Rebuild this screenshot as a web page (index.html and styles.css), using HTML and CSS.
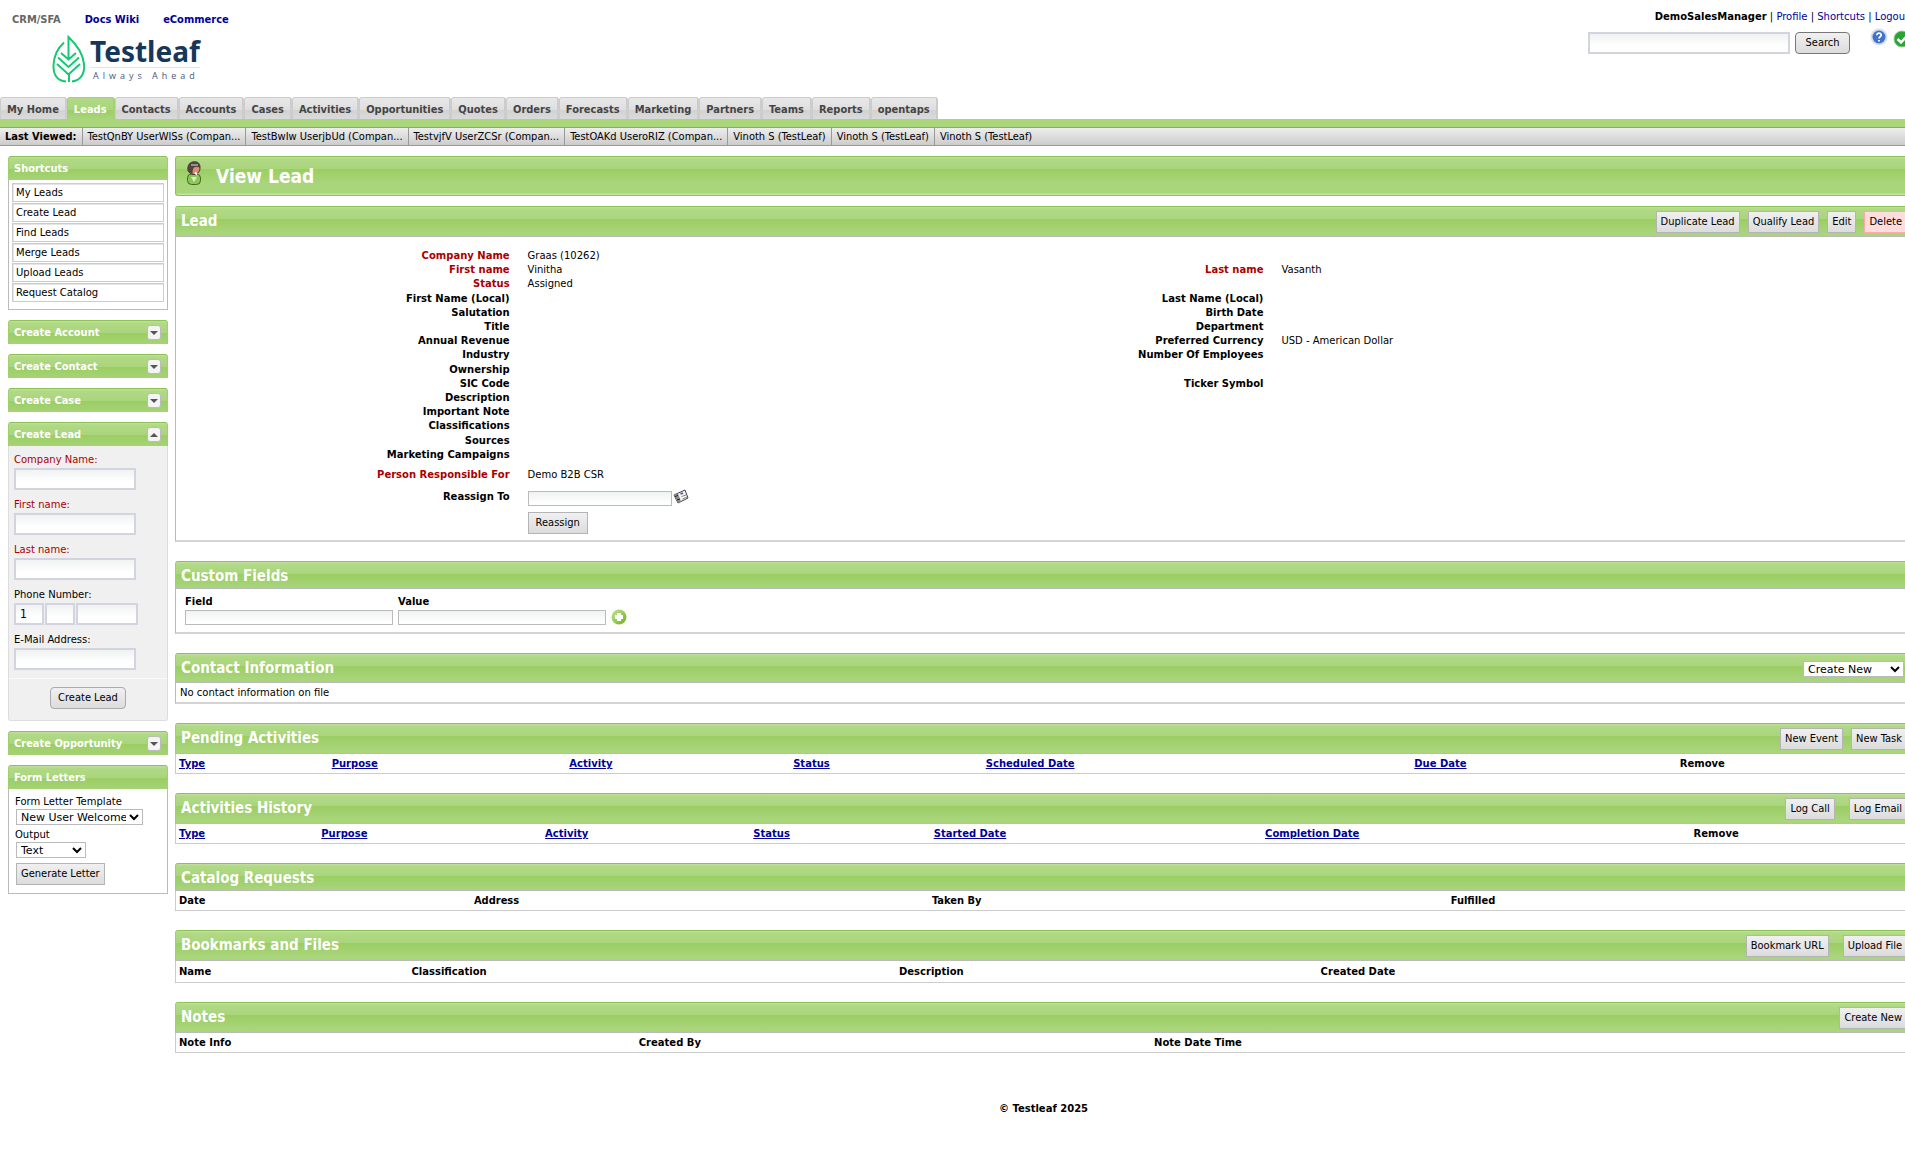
FILE: index.html
```html
<!DOCTYPE html>
<html lang="en">
<head>
<meta charset="utf-8">
<title>View Lead | opentaps CRM</title>
<link rel="stylesheet" href="styles.css">
</head>
<body>
<div class="page">
  <header class="top">
    <div class="brand">
      <nav class="apps"><span class="app-current">CRM/SFA</span><a href="#wiki">Docs Wiki</a><a href="#shop">eCommerce</a></nav>
      <div class="logo">
        <svg class="leaf" viewBox="0 0 34 48" width="34" height="48" fill="none" stroke="#14c972" stroke-width="2" aria-hidden="true">
          <path d="M14 46.500C4 46 1 38 1.500 30C2 20 7 12 12 7.500M20 46.500C30 45 33 37 32 29C31 18 24 9 16.500 2V23M17 47V39M5 29L16.500 39.500L28 29M6 22.500L16.500 32L27 22.500M9 18L16.500 24.500L24 18"/>
        </svg>
        <div class="wordmark"><span class="logo-name">Testleaf</span><span class="logo-tag">Always Ahead</span></div>
      </div>
    </div>
    <div class="account">
      <div class="user-links"><b>DemoSalesManager</b> | <a href="#profile">Profile</a> | <a href="#shortcuts">Shortcuts</a> | <a href="#logout">Logout</a></div>
      <div class="search-row">
        <input class="field search-box" type="text" aria-label="Search">
        <button class="btn btn-round btn-search">Search</button>
        <svg class="help" width="18" height="18" viewBox="0 0 18 18" aria-hidden="true"><circle cx="9" cy="9" r="8.500" fill="#d5dff2"/><circle cx="9" cy="9" r="6.500" fill="#4272cc"/><path d="M6.800 7.200C6.800 4.300 11.400 4.500 11.200 7.200C11 8.800 9 8.700 9 10.500M9 12V13.500" stroke="#fff" stroke-width="1.800" fill="none"/></svg>
        <svg class="ok" width="18" height="18" viewBox="0 0 18 18" aria-hidden="true"><circle cx="9" cy="9" r="8" fill="#2aa535" stroke="#8bc98e"/><path d="M4.500 9L8 12.500L14 6" stroke="#fff" stroke-width="2.500" fill="none"/></svg>
      </div>
    </div>
  </header>

  <nav class="tabs">
    <a href="#home">My Home</a><a href="#leads" class="active">Leads</a><a href="#contacts">Contacts</a><a href="#accounts">Accounts</a><a href="#cases">Cases</a><a href="#activities">Activities</a><a href="#opportunities">Opportunities</a><a href="#quotes">Quotes</a><a href="#orders">Orders</a><a href="#forecasts">Forecasts</a><a href="#marketing">Marketing</a><a href="#partners">Partners</a><a href="#teams">Teams</a><a href="#reports">Reports</a><a href="#opentaps">opentaps</a>
  </nav>
  <div class="tab-rule"></div>
  <div class="viewed">
    <b>Last Viewed:</b><a href="#v1">TestQnBY UserWlSs (Compan...</a><a href="#v2">TestBwIw UserjbUd (Compan...</a><a href="#v3">TestvjfV UserZCSr (Compan...</a><a href="#v4">TestOAKd UseroRIZ (Compan...</a><a href="#v5">Vinoth S (TestLeaf)</a><a href="#v6">Vinoth S (TestLeaf)</a><a href="#v7">Vinoth S (TestLeaf)</a>
  </div>

  <div class="columns">
    <aside class="side">
      <section>
        <h2 class="side-head">Shortcuts</h2>
        <ul class="shortcuts">
          <li><a href="#my">My Leads</a></li><li><a href="#create">Create Lead</a></li><li><a href="#find">Find Leads</a></li><li><a href="#merge">Merge Leads</a></li><li><a href="#upload">Upload Leads</a></li><li><a href="#catalog">Request Catalog</a></li>
        </ul>
      </section>
      <h2 class="side-head tall">Create Account<button class="toggle" aria-label="Expand Create Account"></button></h2>
      <h2 class="side-head tall">Create Contact<button class="toggle" aria-label="Expand Create Contact"></button></h2>
      <h2 class="side-head tall">Create Case<button class="toggle" aria-label="Expand Create Case"></button></h2>
      <section>
        <h2 class="side-head tall">Create Lead<button class="toggle open" aria-label="Collapse Create Lead"></button></h2>
        <form class="quick">
          <div class="quick-fields">
            <label class="required" for="company">Company Name:</label><input class="field" id="company" type="text">
            <label class="required" for="first">First name:</label><input class="field" id="first" type="text">
            <label class="required" for="last">Last name:</label><input class="field" id="last" type="text">
            <label for="country">Phone Number:</label>
            <div class="phone"><input class="field" id="country" type="text" value="1"><input class="field" type="text" aria-label="Area code"><input class="field" type="text" aria-label="Number"></div>
            <label for="email">E-Mail Address:</label><input class="field" id="email" type="text">
          </div>
          <div class="quick-foot"><button class="btn btn-round" type="button">Create Lead</button></div>
        </form>
      </section>
      <h2 class="side-head tall">Create Opportunity<button class="toggle" aria-label="Expand Create Opportunity"></button></h2>
      <section>
        <h2 class="side-head">Form Letters</h2>
        <form class="letters">
          <label for="template">Form Letter Template</label>
          <select class="wide" id="template"><option>New User Welcome</option></select>
          <label for="output">Output</label>
          <select class="narrow" id="output"><option>Text</option></select>
          <button class="btn" type="button">Generate Letter</button>
        </form>
      </section>
    </aside>

    <main class="main">
      <h1 class="view-head">
        <svg width="16" height="26" viewBox="0 0 16 26" aria-hidden="true"><rect x="1.500" y="14" width="13" height="10.500" rx="4" fill="#8cc558" stroke="#3f6a20"/><path d="M5 17L8 22L11 17Z" fill="#d8eec0"/><circle cx="8" cy="8.500" r="6" fill="#d98e72" stroke="#40302c"/><path d="M1.500 9C1 -1 15 -1 14.500 7.500L11 7C8 6.500 6.500 8 6.500 14C2 13 1.500 11 1.500 9Z" fill="#54443f"/><path d="M5 5H12" stroke="#aaa" stroke-width="1.500"/><path d="M9 12.500L11 14.500" stroke="#fff" stroke-width="2"/></svg>
        View Lead
      </h1>

      <section>
        <div class="head lead-head"><h2>Lead</h2><div class="actions"><button class="btn">Duplicate Lead</button><button class="btn">Qualify Lead</button><button class="btn">Edit</button><button class="btn danger">Delete</button></div></div>
        <div class="box lead-box">
          <table class="details">
            <colgroup><col><col><col><col></colgroup>
            <tr><th class="required">Company Name</th><td>Graas (10262)</td><th></th><td></td></tr>
            <tr><th class="required">First name</th><td>Vinitha</td><th class="required">Last name</th><td>Vasanth</td></tr>
            <tr><th class="required">Status</th><td>Assigned</td><th></th><td></td></tr>
            <tr><th>First Name (Local)</th><td></td><th>Last Name (Local)</th><td></td></tr>
            <tr><th>Salutation</th><td></td><th>Birth Date</th><td></td></tr>
            <tr><th>Title</th><td></td><th>Department</th><td></td></tr>
            <tr><th>Annual Revenue</th><td></td><th>Preferred Currency</th><td>USD - American Dollar</td></tr>
            <tr><th>Industry</th><td></td><th>Number Of Employees</th><td></td></tr>
            <tr><th>Ownership</th><td></td><th></th><td></td></tr>
            <tr><th>SIC Code</th><td></td><th>Ticker Symbol</th><td></td></tr>
            <tr><th>Description</th><td></td><th></th><td></td></tr>
            <tr><th>Important Note</th><td></td><th></th><td></td></tr>
            <tr><th>Classifications</th><td></td><th></th><td></td></tr>
            <tr><th>Sources</th><td></td><th></th><td></td></tr>
            <tr><th>Marketing Campaigns</th><td></td><th></th><td></td></tr>
          </table>
          <form class="assign">
            <span class="assign-label required">Person Responsible For</span><span>Demo B2B CSR</span>
            <label class="assign-label" for="reassign">Reassign To</label>
            <span class="lookup"><input class="field thin" id="reassign" type="text"><svg width="16" height="16" viewBox="0 0 16 16" aria-hidden="true"><path d="M1 6L12 1L15 9L5 14Z" fill="#f4f4f6" stroke="#444"/><path d="M1 6L5 4.500L8 12.500L5 14Z" fill="#8a8a8a"/><path d="M2 8L5 6M4 11L7 10" stroke="#222"/><path d="M7.500 5L10 4" stroke="#3c50b8" stroke-width="1.500"/><path d="M8.500 7.500L13 6M9.500 10L14 8" stroke="#888"/></svg></span>
            <span></span><span><button class="btn btn-wide" type="button">Reassign</button></span>
          </form>
        </div>
      </section>

      <section>
        <div class="head"><h2>Custom Fields</h2></div>
        <div class="box custom">
          <div class="pair"><label for="cf">Field</label><input class="field thin" id="cf" type="text"></div>
          <div class="pair"><label for="cv">Value</label><input class="field thin" id="cv" type="text"></div>
          <button class="add" aria-label="Add custom field"><svg width="16" height="16" viewBox="0 0 16 16"><defs><linearGradient id="ring" x1="0" y1="0" x2="1" y2="1"><stop offset="0" stop-color="#c4e398"/><stop offset="1" stop-color="#6fb312"/></linearGradient></defs><circle cx="8" cy="8" r="7.500" fill="url(#ring)"/><path d="M6 4H10V6H12V10H10V12H6V10H4V6H6Z" fill="#fff"/></svg></button>
        </div>
      </section>

      <section>
        <div class="head h-select"><h2>Contact Information</h2><select class="create-new" aria-label="Create New"><option>Create New</option></select></div>
        <div class="box note">No contact information on file</div>
      </section>

      <section>
        <div class="head h-buttons"><h2>Pending Activities</h2><div class="actions"><button class="btn">New Event</button><button class="btn">New Task</button></div></div>
        <table class="grid pending"><tr><th><a href="#t">Type</a></th><th><a href="#p">Purpose</a></th><th><a href="#a">Activity</a></th><th><a href="#s">Status</a></th><th><a href="#d">Scheduled Date</a></th><th><a href="#u">Due Date</a></th><th>Remove</th></tr></table>
      </section>

      <section>
        <div class="head h-buttons"><h2>Activities History</h2><div class="actions loose"><button class="btn">Log Call</button><button class="btn">Log Email</button></div></div>
        <table class="grid history"><tr><th><a href="#t2">Type</a></th><th><a href="#p2">Purpose</a></th><th><a href="#a2">Activity</a></th><th><a href="#s2">Status</a></th><th><a href="#d2">Started Date</a></th><th><a href="#c2">Completion Date</a></th><th>Remove</th></tr></table>
      </section>

      <section>
        <div class="head"><h2>Catalog Requests</h2></div>
        <table class="grid catalog"><tr><th>Date</th><th>Address</th><th>Taken By</th><th>Fulfilled</th></tr></table>
      </section>

      <section>
        <div class="head h-buttons"><h2>Bookmarks and Files</h2><div class="actions loose"><button class="btn">Bookmark URL</button><button class="btn">Upload File</button></div></div>
        <table class="grid files"><tr><th>Name</th><th>Classification</th><th>Description</th><th>Created Date</th></tr></table>
      </section>

      <section>
        <div class="head h-buttons"><h2>Notes</h2><div class="actions"><button class="btn">Create New</button></div></div>
        <table class="grid notes"><tr><th>Note Info</th><th>Created By</th><th>Note Date Time</th></tr></table>
      </section>

      <footer class="foot">© Testleaf 2025</footer>
    </main>
  </div>
</div>
</body>
</html>
```
FILE: styles.css
```css
:root {
  --body-font: Verdana, "DejaVu Sans", sans-serif;
  --ui-font: Tahoma, "DejaVu Sans Condensed", "Noto Sans", sans-serif;
  --bar: linear-gradient(#c0e09c 0, #b2d987 2px, #a9d57b 12px, #9bcd63 12px, #a9d57b 26px);
  --line: #bbb;
}
* { box-sizing: border-box; }
html { overflow-x: hidden; }
body { margin: 0; overflow-x: hidden; background: #fff; color: #000; font: 10px/14px var(--body-font); }
/* the page runs slightly past the right edge of the window */
.page { width: calc(100% + 7px); }
h1, h2 { margin: 0; font-weight: bold; }
a { color: #009; text-decoration: none; }
ul { list-style: none; margin: 0; padding: 0; }
svg { display: block; flex: none; }
.required { color: #a00; }

.field { border: 2px solid #d4d4e0; background: linear-gradient(#f0f3f3, #fff 12px); height: 22px; padding: 0 4px; margin: 0; font: 12px var(--ui-font); border-radius: 0; }
.field.thin { height: 15px; border: 1px solid var(--line); }
.btn { height: 22px; padding: 0 4px; border: 1px solid #b4b4b4; border-radius: 0; background: linear-gradient(#f0f0f0, #dcdcdc); color: #000; font: 11px/18px var(--ui-font); white-space: nowrap; }
.btn-wide { padding: 0 7px; }
.btn-round { border-color: #aaa; border-radius: 4px; padding: 0 7px; }
.btn-search { width: 55px; border-color: #777; }
.danger { background: #fdd; border-color: #faa; }
select { height: 16px; border: 1px solid var(--line); border-radius: 0; background: #fff; color: #000; font: 11px var(--body-font); padding: 0; }

.top { display: flex; justify-content: space-between; height: 97px; }
.apps { display: flex; gap: 24px; padding: 11px 12px 0; font: bold 11px/17px var(--ui-font); }
.app-current { color: #666; }
.logo { display: flex; gap: 4px; padding: 7px 0 0 52px; }
.wordmark { display: flex; flex-direction: column; }
.logo-name { font: bold 28px/32px "Noto Sans", sans-serif; color: #17375a; border-bottom: 1px solid #e2e2e2; }
.logo-tag { font: 9px/15px "Open Sans", sans-serif; letter-spacing: 4px; color: #44597a; padding-left: 3px; }
.account { padding: 10px 3px 0 0; font-size: 10px; display: flex; flex-direction: column; gap: 8px; align-items: flex-end; white-space: nowrap; }
.search-row { display: flex; gap: 5px; margin-right: -2px; }
.search-box { width: 202px; }
.help { margin: -4px 0 0 15px; }
.ok { margin-top: -2px; }

.tabs { display: flex; height: 22px; }
.tabs a { padding: 0 6px; border: 2px solid #ccc; border-width: 1px 2px 0 1px; border-radius: 3px 3px 0 0; background: linear-gradient(#e8e8e8, #dedede 12px, #d2d2d2 12px, #dadada); color: #444; font: bold 11px/23px var(--ui-font); }
.tabs a.active { background: linear-gradient(#b2d987, #a9d57b 12px, #9bcd63 12px, #a9d57b); border-color: #a5d076; color: #fff; }
.tab-rule { height: 8px; background: #a9d57b; }
.viewed { display: flex; height: 19px; border: 1px solid #999; border-width: 1px 0; background: linear-gradient(#eee, #ccc); font: 11px/18px var(--ui-font); white-space: nowrap; }
.viewed b { padding: 0 5px; }
.viewed a { color: #000; border-left: 1px solid #999; padding: 0 5px; }

.columns { display: flex; gap: 7px; padding: 10px 0 0 8px; }
.side { flex: none; width: 160px; display: flex; flex-direction: column; gap: 10px; }
.main { flex: 1; min-width: 0; }

.side-head { display: flex; justify-content: space-between; align-items: center; height: 24px; padding: 0 6px 0 5px; border: 1px solid #a0cf6c; border-top-color: #8cc453; border-bottom: 0; border-radius: 3px 3px 0 0; background: var(--bar); color: #fff; font: bold 11px/24px var(--ui-font); }
.toggle { width: 14px; height: 15px; padding: 0; border: 1px solid #bbb; border-radius: 3px; background: #f4f4f4; display: grid; place-items: center; }
.toggle::before { content: ""; border: 4px solid transparent; border-top-color: #555; border-bottom: 0; }
.toggle.open::before { border-top: 0; border-bottom: 4px solid #555; }
.shortcuts { display: grid; gap: 1px; border: 1px solid var(--line); border-top: 0; padding: 3px 3px 7px; }
.shortcuts li { border: 1px solid #ccc; box-shadow: inset 1px 1px #e4e4e4; padding: 1px 3px; line-height: 15px; }
.shortcuts a { color: #000; }

.quick { border: 1px solid #ddd; border-top: 0; background: #f0f0f0; border-radius: 0 0 3px 3px; }
.quick-fields { display: grid; justify-items: start; padding: 5px 5px 8px; border-bottom: 1px solid #fafafa; }
.quick-fields label { line-height: 17px; }
.quick-fields .field { width: 122px; }
.quick-fields .field:not(:last-child), .phone { margin-bottom: 6px; }
.phone { display: flex; gap: 1px; }
.quick-fields .phone .field { width: 30px; margin: 0; }
.quick-fields .phone .field:last-child { width: 62px; }
.quick-foot { display: flex; justify-content: center; padding: 8px 0 11px; }

.letters { display: grid; justify-items: start; border: 1px solid var(--line); border-top: 0; padding: 6px 6px 8px; }
.letters label { line-height: 14px; }
.letters .wide { width: 127px; margin: 0 0 3px 1px; }
.letters .narrow { width: 70px; margin: 0 0 5px 1px; }
.letters .btn { margin-left: 1px; }

.view-head { display: flex; align-items: center; gap: 14px; height: 40px; padding-left: 10px; border: 1px solid #8cc453; border-right: 0; border-radius: 3px 0 0 3px; background: linear-gradient(#c0e09c 0, #b2d987 2px, #a9d57b 12px, #9bcd63 12px, #a9d57b 26px, #a9d57b 36px, #c4e4a4 37px); color: #fff; font: bold 19px/36px var(--ui-font); margin-bottom: 10px; }
.view-head svg { margin-bottom: 6px; }
.head { display: flex; justify-content: space-between; align-items: flex-start; height: 28px; padding: 0 4px 0 5px; border: 1px solid #a0cf6c; border-top-color: #8cc453; border-bottom-color: var(--line); border-radius: 3px 3px 0 0; background: var(--bar); }
.head h2 { color: #fff; font: bold 15px/28px var(--ui-font); }
.lead-head { height: 31px; }
.h-select { height: 30px; }
.h-buttons { height: 31px; }
.actions { display: flex; gap: 8px; padding-top: 4px; }
.actions.loose { gap: 14px; }
.create-new { width: 101px; margin: 7px 3px 0 0; }
.box { border: 1px solid var(--line); border-top: 0; border-bottom: 2px solid #d4d4d4; margin-bottom: 19px; }
.lead-box { padding: 12px 1px 6px; }

.details { width: 100%; height: 213px; border-collapse: collapse; table-layout: fixed; }
.details col { width: 20%; }
.details col:nth-child(2) { width: 26%; }
.details col:nth-child(3) { width: 17.5%; }
.details col:nth-child(4) { width: 36.5%; }
.details th { text-align: right; padding: 0 14px 0 0; }
.details td { padding: 0 4px; }
.assign { display: grid; grid-template-columns: 20% auto; row-gap: 4px; align-items: center; padding-top: 6px; }
.assign > :nth-child(even) { padding-left: 4px; }
.assign-label { font-weight: bold; text-align: right; padding-right: 14px; }
.lookup { display: flex; gap: 1px; align-items: center; height: 22px; }
.lookup .field { width: 144px; margin-top: 2px; }

.custom { display: flex; align-items: flex-end; gap: 5px; padding: 5px 9px 7px; }
.pair { display: grid; }
.pair label { font-weight: bold; line-height: 16px; }
.pair .field { width: 208px; }
.add { padding: 0; border: 0; background: none; }
.note { padding: 4px 4px 3px; line-height: 12px; }

.grid { width: 100%; height: 20px; table-layout: fixed; border-collapse: separate; border-spacing: 0; border: 1px solid #ccc; border-top: 0; margin-bottom: 19px; }
.grid th { text-align: left; padding: 2px 3px 1px; }
.grid th a { text-decoration: underline; }
.grid.files { height: 22px; }
.pending th:nth-child(1) { width: 8.8%; }
.pending th:nth-child(2) { width: 13.7%; }
.pending th:nth-child(3) { width: 12.9%; }
.pending th:nth-child(4) { width: 11.1%; }
.pending th:nth-child(5) { width: 24.7%; }
.pending th:nth-child(6) { width: 15.3%; }
.history th:nth-child(1) { width: 8.2%; }
.history th:nth-child(2) { width: 12.9%; }
.history th:nth-child(3) { width: 12%; }
.history th:nth-child(4) { width: 10.4%; }
.history th:nth-child(5) { width: 19.1%; }
.history th:nth-child(6) { width: 24.7%; }
.catalog th { font: bold 11px/14px var(--ui-font); }
.catalog th:nth-child(1) { width: 17%; }
.catalog th:nth-child(2) { width: 26.4%; }
.catalog th:nth-child(3) { width: 29.9%; }
.files th:nth-child(1) { width: 13.4%; }
.files th:nth-child(2) { width: 28.1%; }
.files th:nth-child(3) { width: 24.3%; }
.notes th:nth-child(1) { width: 26.5%; }
.notes th:nth-child(2) { width: 29.7%; }
.foot { padding: 30px 0 35px; text-align: center; font-weight: bold; }
```
